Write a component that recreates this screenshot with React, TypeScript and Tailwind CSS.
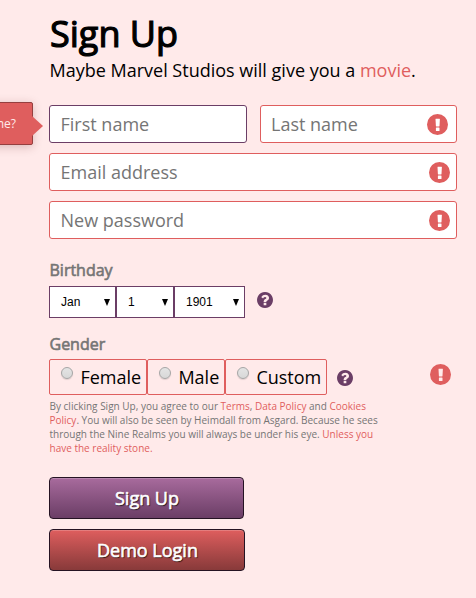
import React from "react";

function ErrorIcon({ className = "" }: { className?: string }) {
  return (
    <svg viewBox="0 0 21 21" className={`size-[21px] shrink-0 fill-[#df5e5e] ${className}`}>
      <path
        fillRule="evenodd"
        d="M10.5 0a10.5 10.5 0 1 0 0 21 10.5 10.5 0 1 0 0-21zM8.9 4.7h3.6q.4 0 .4.4l-.4 6.9q0 .4-.4.4h-2.8q-.4 0-.4-.4l-.4-6.9q0-.4.4-.4zM9.4 13.6h2.6q.5 0 .5.5v2.3q0 .5-.5.5h-2.6q-.5 0-.5-.5v-2.3q0-.5.5-.5z"
      />
    </svg>
  );
}

function HelpIcon({ className = "" }: { className?: string }) {
  return (
    <svg viewBox="128 128 1536 1536" className={`size-4 shrink-0 fill-[#6b3e66] ${className}`}>
      <path d="M1024 1376v-192q0-14-9-23t-23-9h-192q-14 0-23 9t-9 23v192q0 14 9 23t23 9h192q14 0 23-9t9-23zm256-672q0-88-55.5-163t-138.5-116-170-41q-243 0-371 213-15 24 8 42l132 100q7 6 19 6 16 0 25-12 53-68 86-92 34-24 86-24 48 0 85.5 26t37.5 59q0 38-20 61t-68 45q-63 28-115.5 86.5t-52.5 125.5v36q0 14 9 23t23 9h192q14 0 23-9t9-23q0-19 21.5-49.5t54.5-49.5q32-18 49-28.5t46-35 44.5-48 28-60.5 12.5-81zm384 192q0 209-103 385.5t-279.5 279.5-385.5 103-385.5-103-279.5-279.5-103-385.5 103-385.5 279.5-279.5 385.5-103 385.5 103 279.5 279.5 103 385.5z" />
    </svg>
  );
}

function Field({ label, className, icon }: { label: string; className: string; icon?: string }) {
  return (
    <div className={`flex h-[38px] items-center rounded-[3px] border bg-white ${className}`}>
      <input
        placeholder={label}
        className="h-full w-0 min-w-0 flex-1 bg-transparent text-[18px] outline-none placeholder:text-[#757575]"
      />
      {icon && <ErrorIcon className={icon} />}
    </div>
  );
}

function Picker({ value, className }: { value: string; className: string }) {
  return (
    <div className={`flex h-8 items-center justify-between border border-[#6b3e66] bg-white pr-[5px] pl-[11px] font-['Liberation_Sans',sans-serif] text-[12px] text-black ${className}`}>
      <span>{value}</span>
      <svg viewBox="0 0 6 7" className="h-[7px] w-1.5 fill-black">
        <path d="M0 0h6L3 7z" />
      </svg>
    </div>
  );
}

function Choice({ label, className }: { label: string; className: string }) {
  return (
    <label className={`flex h-9 rounded-[2px] border border-[#df5e5e] pl-[11px] ${className}`}>
      <span className="mt-[7px] size-3 shrink-0 rounded-full border border-[#a5a5a5] bg-linear-to-b from-[#e4e4e4] to-[#d8d8d8] shadow-[0_1px_1px_rgba(0,0,0,0.12)]" />
      <span className="mt-[5px] ml-[7.4px] text-[18px] leading-[25px] text-black">{label}</span>
    </label>
  );
}

export default function App() {
  return (
    <main className="relative h-[598px] w-[476px] overflow-hidden bg-[#ffeaea] pl-[49px] font-['Open_Sans',sans-serif]">
      <h1 className="pt-[9px] pl-px text-[36px] leading-[49px] text-black [-webkit-text-stroke:1.2px_black]">Sign Up</h1>
      <p className="pl-[0.5px] text-[18px] leading-[25px] whitespace-nowrap text-black">
        Maybe Marvel Studios will give you a <a className="text-[#df5e5e]">movie</a>.
      </p>

      <aside className="absolute top-[102px] right-[443px] flex h-[43px] items-center rounded-[2px] border border-[#953f3f] bg-[#df5e5e] pr-4 pl-4 text-[12px] whitespace-nowrap text-[#ffeaea] shadow-[0_2px_10px_rgba(100,30,30,0.25)]">
        What's your name?
        <span className="absolute top-[13px] -right-[11px] h-5 w-[11px] bg-[#df5e5e] [clip-path:polygon(0_0,100%_50%,0_100%)]" />
      </aside>

      <div className="mt-[22px] flex w-[408px] flex-col gap-2.5">
        <div className="flex justify-between">
          <Field label="First name" className="w-[198px] border-[#6b3e66] pl-[10.5px]" />
          <Field label="Last name" className="w-[197px] border-[#df5e5e] pl-2.5" icon="mr-2" />
        </div>
        <Field label="Email address" className="border-[#df5e5e] pl-[10.5px]" icon="mr-1.5 mt-px" />
        <Field label="New password" className="border-[#df5e5e] pl-[10.5px]" icon="mr-1.5 mt-px" />
      </div>

      <h2 className="mt-5 pl-[0.5px] text-[16px] leading-[22px] text-[#757575] [-webkit-text-stroke:0.6px_#757575]">Birthday</h2>
      <div className="mt-[5px] flex">
        <Picker value="Jan" className="w-[67px]" />
        <Picker value="1" className="w-[58px]" />
        <Picker value="1901" className="w-[71px]" />
        <HelpIcon className="mt-1.5 ml-3" />
      </div>

      <h2 className="mt-[15px] pl-[0.5px] text-[16px] leading-[22px] text-[#757575] [-webkit-text-stroke:0.6px_#757575]">Gender</h2>
      <div className="mt-1 flex w-[402px]">
        <Choice label="Female" className="w-[98px]" />
        <Choice label="Male" className="w-[78px]" />
        <Choice label="Custom" className="w-[102px]" />
        <HelpIcon className="mt-[11px] ml-2.5" />
        <ErrorIcon className="mt-[5px] ml-auto" />
      </div>

      <p className="mt-1 pl-[0.5px] text-[10px] leading-[14px] whitespace-nowrap text-[#757575]">
        By clicking Sign Up, you agree to our <a className="text-[#df5e5e]">Terms</a>,{" "}
        <a className="text-[#df5e5e]">Data Policy</a> and <a className="text-[#df5e5e]">Cookies</a>
        <br />
        <a className="text-[#df5e5e]">Policy</a>. You will also be seen by Heimdall from Asgard. Because he sees
        <br />
        through the Nine Realms you will always be under his eye. <a className="text-[#df5e5e]">Unless you</a>
        <br />
        <a className="text-[#df5e5e]">have the reality stone.</a>
      </p>

      <div className="mt-[22px] flex flex-col items-start gap-2.5 text-[18px] text-white [-webkit-text-stroke:0.6px_white] [text-shadow:1px_1px_1px_rgba(0,0,0,0.8)]">
        <button className="h-[42px] w-[195px] rounded-[4px] border border-[#251323] bg-linear-to-b from-[#a86b9d] to-[#6b3e66] pl-px shadow-[inset_0_1px_0_rgba(255,255,255,0.2)] [text-shadow:inherit]">
          Sign Up
        </button>
        <button className="h-[42px] w-[196px] rounded-[4px] border border-[#251323] bg-linear-to-b from-[#df5e5e] to-[#883a3a] pl-px shadow-[inset_0_1px_0_rgba(255,255,255,0.2)] [text-shadow:inherit]">
          Demo Login
        </button>
      </div>
    </main>
  );
}
